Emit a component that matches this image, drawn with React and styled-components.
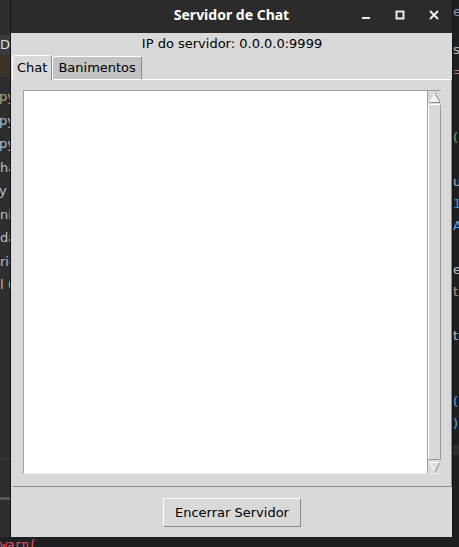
import React from "react";
import styled, { createGlobalStyle } from "styled-components";

const GlobalStyle = createGlobalStyle`
  html, body {
    margin: 0;
    padding: 0;
    background: #1e1f22;
    overflow: hidden;
  }
  #root {
    width: 459px;
    height: 547px;
  }
`;

const Desktop = styled.div`
  display: flex;
  flex-direction: column;
  width: 459px;
  height: 547px;
  overflow: hidden;
`;

const Stage = styled.div`
  display: flex;
  height: 537px;
  flex: none;
`;

const EditorStrip = styled.div`
  flex: none;
  width: ${(p) => p.$width}px;
  box-sizing: border-box;
  display: flex;
  flex-direction: column;
  overflow: hidden;
  background: ${(p) => p.$bg};
  border-left: ${(p) => (p.$edge === "left" ? "1px solid #141414" : "none")};
  border-right: ${(p) => (p.$edge === "right" ? "1px solid #141414" : "none")};
  font: 13px "DejaVu Sans", sans-serif;
`;

const CodeLine = styled.div`
  flex: none;
  height: ${(p) => p.$h}px;
  line-height: ${(p) => p.$h}px;
  white-space: nowrap;
  overflow: hidden;
  text-indent: ${(p) => p.$indent || 0}px;
  color: ${(p) => p.$color || "#bcbec4"};
  background: ${(p) => p.$bg || "transparent"};
`;

const Window = styled.div`
  flex: none;
  width: 441px;
  display: flex;
  flex-direction: column;
  background: #d9d9d9;
`;

const TitleBar = styled.div`
  flex: none;
  height: 33px;
  display: grid;
  grid-template-columns: 1fr auto 1fr;
  align-items: center;
  background: #2b2b2b;
`;

const Title = styled.div`
  grid-column: 2;
  font: 700 14px/19px "Noto Sans", sans-serif;
  color: #ffffff;
  margin-bottom: 4px;
`;

const Controls = styled.div`
  grid-column: 3;
  justify-self: end;
  display: flex;
  padding-right: 1px;
`;

const ControlButton = styled.div`
  width: 34px;
  height: 33px;
  box-sizing: border-box;
  padding-bottom: 3px;
  display: flex;
  align-items: center;
  justify-content: center;
  color: #ececec;
`;

const Body = styled.div`
  flex: 1;
  display: flex;
  flex-direction: column;
  padding-left: 1px;
  font: 13px/15px "DejaVu Sans", sans-serif;
  color: #000;
`;

const ServerInfo = styled.div`
  text-align: center;
  margin: 3px 0 4px;
`;

const Notebook = styled.div`
  display: flex;
  flex-direction: column;
`;

const TabRow = styled.div`
  display: flex;
  align-items: flex-end;
  height: 24px;
  position: relative;
  z-index: 1;
`;

const Tab = styled.div`
  box-sizing: border-box;
  height: ${(p) => (p.$active ? 25 : 23)}px;
  margin-bottom: ${(p) => (p.$active ? -1 : 0)}px;
  padding: ${(p) => (p.$active ? "4px 4px 0" : "3px 5px 0")};
  background: ${(p) => (p.$active ? "#d9d9d9" : "#c3c3c3")};
  border-top: 1px solid #ffffff;
  border-left: 1px solid #ffffff;
  border-right: 1px solid #8a8a8a;
  border-radius: 3px 3px 0 0;
  white-space: nowrap;
`;

const Pane = styled.div`
  display: flex;
  height: 408px;
  box-sizing: border-box;
  padding: 10px 10px 12px 10px;
  border-top: 1px solid #ffffff;
  border-left: 1px solid #d9d9d9;
  border-right: 1px solid #8a8a8a;
  border-bottom: 1px solid #8a8a8a;
`;

const ChatLog = styled.div`
  flex: 1;
  background: #ffffff;
  border-top: 1px solid #a0a0a0;
  border-left: 1px solid #a0a0a0;
  border-bottom: 1px solid #ececec;
`;

const Scrollbar = styled.div`
  flex: none;
  width: 14px;
  box-sizing: border-box;
  display: flex;
  flex-direction: column;
  border-left: 1px solid #a0a0a0;
  border-top: 1px solid #a0a0a0;
  border-bottom: 1px solid #ececec;
  background: #d9d9d9;
`;

const ArrowBox = styled.div`
  flex: none;
  height: 13px;
  display: flex;
  align-items: center;
  justify-content: center;
`;

const Thumb = styled.div`
  flex: 1;
  border-top: 1px solid #ffffff;
  border-left: 1px solid #ffffff;
  border-right: 1px solid #9a9a9a;
  border-bottom: 1px solid #9a9a9a;
`;

const Footer = styled.div`
  flex: 1;
  display: flex;
  justify-content: center;
  align-items: flex-start;
  padding-top: 11px;
`;

const Button = styled.button`
  width: 138px;
  height: 29px;
  box-sizing: border-box;
  padding: 0 11px;
  background: #d9d9d9;
  border-style: solid;
  border-width: 1px;
  border-color: #ffffff #8a8a8a #8a8a8a #ffffff;
  border-radius: 0;
  font: 13px/15px "DejaVu Sans", sans-serif;
  color: #000;
`;

const Console = styled.div`
  flex: 1;
  overflow: hidden;
  padding-top: 1px;
  font: 12px/14px "DejaVu Sans Mono", monospace;
  color: #f75464;
  white-space: nowrap;
`;

const leftLines = [
  { h: 35 },
  { h: 20, text: "DI", bg: "#393b40", color: "#dfe1e5" },
  { h: 22, bg: "#3d3324" },
  { h: 8 },
  { h: 23.5, text: "py", color: "#c9a26d", indent: -1 },
  { h: 23.5, text: "py", indent: -1 },
  { h: 23.5, text: "py", indent: -1 },
  { h: 23.5, text: "ha" },
  { h: 23.5, text: "y", indent: -1 },
  { h: 23.5, text: "ni" },
  { h: 23.5, text: "da" },
  { h: 23.5, text: "rie" },
  { h: 23.5, text: "l (", color: "#d5b778" },
  { h: 161 },
  { h: 1, bg: "#3a3c41" },
  { h: 38 },
  { h: 3, bg: "#55585e" },
];

const rightLines = [
  { h: 24, text: "e", color: "#8c93b0" },
  { h: 15 },
  { h: 22, text: "s" },
  { h: 22, text: "=", color: "#d07a7a" },
  { h: 22 },
  { h: 22 },
  { h: 22, text: "(", color: "#6aab73" },
  { h: 22 },
  { h: 22, text: "u" },
  { h: 22, text: "1", color: "#2aacb8" },
  { h: 22, text: "A", color: "#56a8f5" },
  { h: 22 },
  { h: 22, text: "e" },
  { h: 22, text: "t", color: "#cf8e6d" },
  { h: 22 },
  { h: 22, text: "t" },
  { h: 22 },
  { h: 22 },
  { h: 22, text: "(", color: "#56a8f5" },
  { h: 22, text: ")", color: "#56a8f5" },
  { h: 10 },
  { h: 10, bg: "#2b2d30" },
];

const renderLines = (lines) =>
  lines.map((l, i) => (
    <CodeLine key={i} $h={l.h} $bg={l.bg} $color={l.color} $indent={l.indent}>
      {l.text}
    </CodeLine>
  ));

const MinimizeIcon = () => (
  <svg width="12" height="12" viewBox="0 0 12 12">
    <rect x="2" y="8" width="8" height="2" fill="currentColor" />
  </svg>
);

const MaximizeIcon = () => (
  <svg width="12" height="12" viewBox="0 0 12 12">
    <rect x="2.5" y="2.5" width="7" height="7" fill="none" stroke="currentColor" strokeWidth="2" />
  </svg>
);

const CloseIcon = () => (
  <svg width="12" height="12" viewBox="0 0 12 12">
    <path d="M2 2 L10 10 M10 2 L2 10" stroke="currentColor" strokeWidth="2" />
  </svg>
);

const Arrow = ({ down }) => (
  <svg width="12" height="12" viewBox="0 0 12 12">
    {down ? (
      <>
        <polygon points="1,1.5 11,1.5 6,11" fill="#dcdcdc" />
        <polyline points="1,1.5 11,1.5" stroke="#ffffff" fill="none" />
        <polyline points="1,1.5 6,11" stroke="#ffffff" fill="none" />
        <polyline points="11,1.5 6,11" stroke="#8a8a8a" fill="none" />
      </>
    ) : (
      <>
        <polygon points="6,1 11,10.5 1,10.5" fill="#f2f2f2" />
        <polyline points="6,1 1,10.5" stroke="#ffffff" fill="none" />
        <polyline points="6,1 11,10.5 1,10.5" stroke="#8a8a8a" fill="none" />
      </>
    )}
  </svg>
);

export default function App() {
  return (
    <>
      <GlobalStyle />
      <Desktop>
        <Stage>
          <EditorStrip $width={11} $bg="#2b2d30" $edge="right">
            {renderLines(leftLines)}
          </EditorStrip>
          <Window>
            <TitleBar>
              <Title>Servidor de Chat</Title>
              <Controls>
                <ControlButton>
                  <MinimizeIcon />
                </ControlButton>
                <ControlButton>
                  <MaximizeIcon />
                </ControlButton>
                <ControlButton>
                  <CloseIcon />
                </ControlButton>
              </Controls>
            </TitleBar>
            <Body>
              <ServerInfo>IP do servidor: 0.0.0.0:9999</ServerInfo>
              <Notebook>
                <TabRow>
                  <Tab $active>Chat</Tab>
                  <Tab>Banimentos</Tab>
                </TabRow>
                <Pane>
                  <ChatLog />
                  <Scrollbar>
                    <ArrowBox>
                      <Arrow />
                    </ArrowBox>
                    <Thumb />
                    <ArrowBox>
                      <Arrow down />
                    </ArrowBox>
                  </Scrollbar>
                </Pane>
              </Notebook>
              <Footer>
                <Button type="button">Encerrar Servidor</Button>
              </Footer>
            </Body>
          </Window>
          <EditorStrip $width={7} $bg="#1e1f22" $edge="left">
            {renderLines(rightLines)}
          </EditorStrip>
        </Stage>
        <Console>warn(</Console>
      </Desktop>
    </>
  );
}
